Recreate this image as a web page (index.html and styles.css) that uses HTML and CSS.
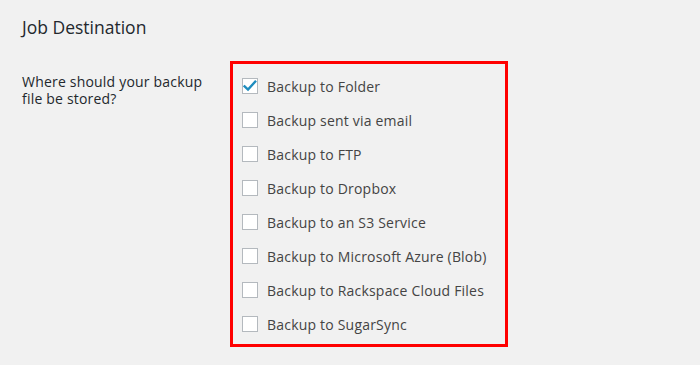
FILE: index.html
```html
<!DOCTYPE html>
<html lang="en">
<head>
  <meta charset="UTF-8">
  <title>Job Destination</title>
  <link rel="stylesheet" href="styles.css">
</head>
<body>

  <div class="wrap">
    <!-- Заголовок -->
    <h2 class="section-title">Job Destination</h2>

    <!-- Строка формы -->
    <div class="form-row">
      <div class="form-label">Where should your backup file be stored?</div>

      <div class="dest-list">
        <label class="dest-item">
          <span class="check checked">
            <svg width="14" height="14" viewBox="0 0 14 14"><path d="M1.6 7.4 L5 10.6 L12.2 2.6" fill="none" stroke="#1e8cbe" stroke-width="2.4" stroke-linecap="square"/></svg>
          </span>
          Backup to Folder
        </label>
        <label class="dest-item"><span class="check"></span>Backup sent via email</label>
        <label class="dest-item"><span class="check"></span>Backup to FTP</label>
        <label class="dest-item"><span class="check"></span>Backup to Dropbox</label>
        <label class="dest-item"><span class="check"></span>Backup to an S3 Service</label>
        <label class="dest-item"><span class="check"></span>Backup to Microsoft Azure (Blob)</label>
        <label class="dest-item"><span class="check"></span>Backup to Rackspace Cloud Files</label>
        <label class="dest-item"><span class="check"></span>Backup to SugarSync</label>
      </div>
    </div>
  </div>

</body>
</html>
```

FILE: styles.css
```css
* {
  margin: 0;
  padding: 0;
  box-sizing: border-box;
}

body {
  font-family: 'Open Sans', 'Liberation Sans', sans-serif;
  font-size: 14px;
  letter-spacing: 0.2px;
  color: #444;
  background-color: #f1f1f1;
}

.wrap {
  padding: 15px 22px 0;
}

/* Заголовок */
.section-title {
  font-size: 17.5px;
  font-weight: 400;
  letter-spacing: 0;
  line-height: 25px;
  color: #23282d;
  height: 46px;
}

/* Строка формы */
.form-row {
  display: flex;
  align-items: flex-start;
}

.form-label {
  width: 208px;
  padding: 12px 20px 0 0;
  line-height: 17px;
  color: #23282d;
}

/* Список направлений */
.dest-list {
  width: 278px;
  border: 3px solid #ff0000;
  padding: 5px 9px 3px;
}

.dest-item {
  display: flex;
  align-items: center;
  height: 34px;
  gap: 9px;
  cursor: pointer;
}

.check {
  width: 16px;
  height: 16px;
  border: 1px solid #b4b9be;
  background-color: #fff;
  display: flex;
  align-items: center;
  justify-content: center;
  flex-shrink: 0;
}
```
